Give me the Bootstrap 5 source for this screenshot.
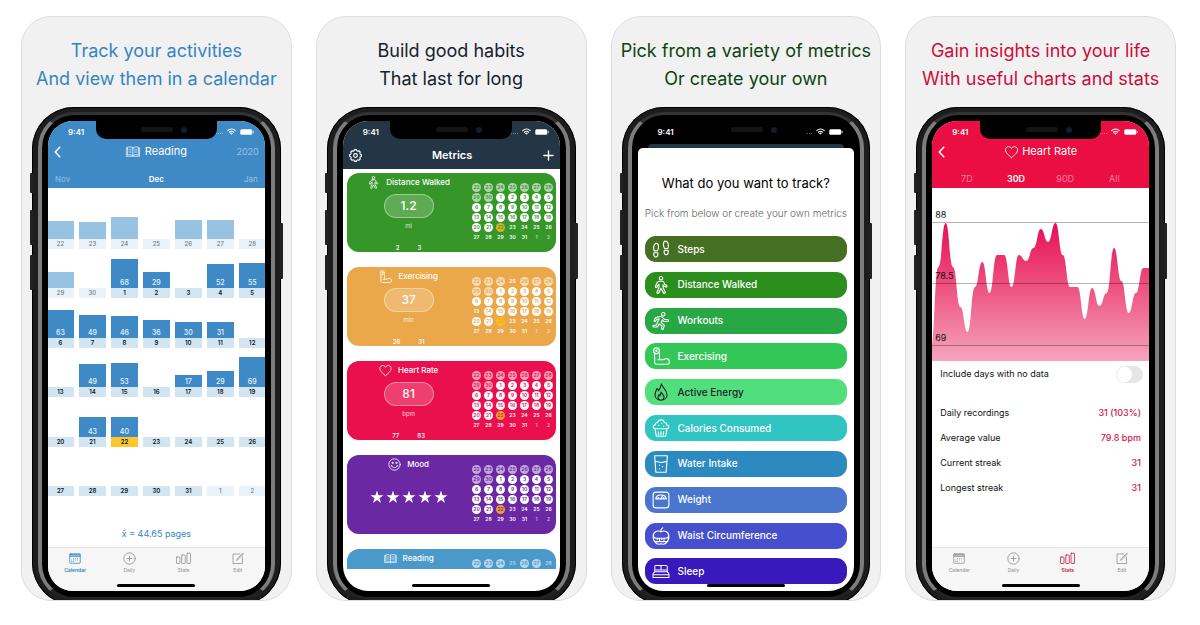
<!DOCTYPE html>
<html lang="en">
<head>
<meta charset="utf-8">
<meta name="viewport" content="width=device-width, initial-scale=1">
<title>Metrics tracker – previews</title>
<link href="https://cdn.jsdelivr.net/npm/bootstrap@5.3.0/dist/css/bootstrap.min.css" rel="stylesheet">
<style>
  body { font-family: Inter, "Liberation Sans", sans-serif; background: #fff; color: #111; }
  a { text-decoration: none; color: inherit; }
  .gallery { padding: 16px 24px 22px 21px; }
  .promo { background: #f1f1f1; border: 1px solid #dcdede; border-radius: 30px; padding: 20px 10px 0; }
  .promo h2 { font-size: 18px; line-height: 28px; font-weight: 400; margin: 0 -8px 14px; }
  .tone-blue { color: #3585c2; } .tone-navy { color: #16222e; }
  .tone-green { color: #0c4411; } .tone-red { color: #cb0d3c; }
  svg.ico { fill: none; stroke: currentColor; stroke-width: 1.5; stroke-linecap: round; stroke-linejoin: round; flex: none; }
  svg.ico.heavy { stroke-width: 3; }

  /* phone body */
  .phone { background: #1d1d1d; border-radius: 42px; padding: 5px 6px; margin-bottom: -5px; box-shadow: inset 0 0 0 1px #000; }
  .rim { border: solid; border-width: 3px 4px; border-color: #333 #7d7d7d #222; border-radius: 36px; background: #000; padding: 6px; }
  .screen { aspect-ratio: 217 / 471; border-radius: 25px; background: #fff; }
  .side-key { width: 3px; background: #222; border-radius: 1px; left: -2px; height: 35px; }
  .key-mute { top: 66px; height: 20px; } .key-up { top: 103px; } .key-down { top: 148px; }
  .key-power { left: auto; right: -2px; top: 116px; height: 56px; }
  .notch { left: 22%; right: 22%; top: -1px; height: 19px; background: #000; border-radius: 0 0 10px 10px; z-index: 2; }
  .notch i { width: 32px; height: 5px; border-radius: 3px; background: #151515; }
  .notch b { width: 6px; height: 6px; border-radius: 3px; background: #101d33; }
  .status { height: 21px; padding: 0 11px 0 20px; font-size: 8px; font-weight: 600; color: #fff; }
  .signal { width: 10px; height: 5px; border-bottom: 1px dotted rgba(255,255,255,.4); }
  .home-bar { width: 78px; height: 3px; border-radius: 2px; background: #000; bottom: 4px; z-index: 3; }
  .bar-title { height: 19px; font-size: 11px; padding: 0 6px; }
  .year { font-size: 9px; }
  .head-blue { background: #3e8ac7; } .head-navy { background: #243646; } .head-red { background: #ea0e42; }
  .icon-btn { background: none; border: 0; padding: 0; color: #fff; line-height: 0; }

  /* tabs in the coloured headers */
  .months { height: 27px; padding: 9px 7px 0; font-size: 8px; line-height: 18px; }
  .ranges { height: 27px; padding: 9px 10px 0; font-size: 9px; line-height: 18px; }
  .dim { opacity: .45; }

  /* month calendar */
  .month { margin: 11px -1px 0; }
  .week { display: grid; grid-template-columns: repeat(7, 1fr); column-gap: 5px; flex: 1 1 0; }
  .day-bar { background: #3e8ac7; color: #e9f3fa; font-size: 7px; line-height: 10px; font-weight: 500; }
  .day-num { background: #d2e5f3; height: 10px; font-size: 6px; line-height: 10px; font-weight: 600; }
  .other .day-bar { background: #97c2e1; } .other .day-num { background: #e9f2f9; color: #777; font-weight: 500; }
  .today .day-num { background: #fdc62f; }
  .mean { height: 51px; padding-top: 16px; font-size: 9px; line-height: 44px; color: #3585c2; }

  .tabbar { height: 44px; background: #f6f6f6; border-top: 1px solid #e6e6e6; padding-top: 4px; font-size: 5px; line-height: 7px; color: #8c8c8c; }
  .tab-item { gap: 2px; }

  /* metric cards */
  .metrics { padding: 4px 4px 0; gap: 15px; margin-bottom: 22px; }
  .metric { height: 79px; border-radius: 12px; color: #fff; flex: none; }
  .metric.peek { height: 22px; border-radius: 12px 12px 0 0; }
  .metric-main { padding-top: 3px; }
  .metric-name { font-size: 8px; line-height: 12px; font-weight: 500; gap: 6px; height: 12px; }
  .pill { width: 50px; height: 24px; margin-top: 6px; border: 1px solid rgba(255,255,255,.4); border-radius: 12px; background: rgba(255,255,255,.2); color: #fff; font-size: 12px; line-height: 20px; padding: 0; font-weight: 500; }
  .unit { font-size: 6px; line-height: 10px; margin-top: 3px; opacity: .8; }
  .minmax { font-size: 6px; line-height: 8px; gap: 18px; font-weight: 600; margin-top: 13px; opacity: .9; }
  .stars { gap: 2px; margin-top: 20px; }
  .mini { width: 85px; padding-top: 10px; display: grid; grid-template-columns: repeat(7, 12px); grid-auto-rows: 10px; justify-items: center; }
  .mini span { width: 9px; height: 9px; border-radius: 5px; font-size: 5px; line-height: 9px; text-align: center; font-weight: 600; }
  .mini .on { background: #fff; color: var(--tone); } .mini .past { background: rgba(255,255,255,.6); color: var(--tone); }
  .mini .now { background: var(--now); color: var(--tone); } .mini .next { opacity: .6; }

  /* picker */
  .behind { height: 6px; margin: 2px 10px 0; background: #243646; border-radius: 4px 4px 0 0; }
  .sheet { background: #fff; border-radius: 5px 5px 0 0; margin-top: -2px; padding: 24px 7px 7px; z-index: 1; }
  .sheet h3 { font-size: 13px; line-height: 22px; font-weight: 400; margin: 0 -6px; color: #000; }
  .sheet p { font-size: 10px; line-height: 16px; font-weight: 300; color: #666; margin: 11px -6px 15px; }
  .option { height: 26px; border: 0; border-radius: 11px; padding: 0 7px; gap: 8px; color: #fff; font-size: 10px; font-weight: 500; background: var(--tone); }

  /* stats */
  .chart { height: 173px; }
  .chart svg { width: 100%; height: 100%; }
  .axis { left: 3px; font-size: 9px; line-height: 12px; color: #111; }
  .axis-top { top: 21px; } .axis-mid { top: 82px; } .axis-low { top: 144px; }
  .include { padding: 0 6px 0 8px; height: 26px; font-size: 9px; }
  .include .form-check-input { width: 27px; height: 17px; margin: 0; border: 0; background-color: #e6e6e7; --bs-form-switch-bg: url("data:image/svg+xml,%3csvg xmlns='http://www.w3.org/2000/svg' viewBox='-4 -4 8 8'%3e%3ccircle r='3.6' fill='%23fff'/%3e%3c/svg%3e"); }
  .facts { margin: 13px 0 0; font-size: 9px; line-height: 15px; }
  .facts th { font-weight: 400; padding: 5px 8px; }
  .facts td { font-weight: 500; color: #d2144b; text-align: right; padding: 5px 8px; }
</style>
</head>
<body>
<svg class="d-none" aria-hidden="true">
  <symbol id="i-book" viewBox="0 0 30 24"><path d="M15 4.500C12 2.500 7 2.500 4 3.500v15.500c3-1 8-1 11 1 3-2 8-2 11-1V3.500c-3-1-8-1-11 1zM15 4.500V20M4 5H1.500v16.500H13.500l1.500 1 1.500-1H28.500V5H26M7 8.500c2-.5 3.500-.3 5 .3M7 13c2-.5 3.500-.3 5 .3M23 8.500c-2-.5-3.500-.3-5 .3M23 13c-2-.5-3.500-.3-5 .3"/></symbol>
  <symbol id="i-heart" viewBox="0 0 24 24"><path d="M12 21.500C8 18 1.500 13.500 1.500 8.300 1.500 5 4 2.800 6.800 2.800c2.300 0 4.200 1.200 5.200 3.400 1-2.200 2.900-3.400 5.200-3.400 2.800 0 5.300 2.200 5.300 5.500 0 5.200-6.500 9.700-10.500 13.200z"/></symbol>
  <symbol id="i-gear" viewBox="-12 -12 24 24"><path stroke-width="2" d="M-1.900-10.800 1.900-10.800 2.500-8.700 4.400-7.900 6.300-9 9-6.300 7.900-4.400 8.700-2.500 10.800-1.900 10.800 1.900 8.700 2.500 7.900 4.400 9 6.300 6.300 9 4.400 7.900 2.500 8.700 1.900 10.800-1.900 10.800-2.500 8.700-4.400 7.900-6.300 9-9 6.300-7.900 4.400-8.700 2.500-10.800 1.900-10.800-1.900-8.700-2.500-7.900-4.400-9-6.300-6.300-9-4.400-7.900-2.500-8.700z"/><circle r="3.500" stroke-width="2"/></symbol>
  <symbol id="i-plus" viewBox="0 0 24 24"><path d="M12 2v20M2 12h20"/></symbol>
  <symbol id="i-back" viewBox="0 0 14 24"><path d="M11.500 2.500 2.500 12l9 9.500"/></symbol>
  <symbol id="i-smile" viewBox="0 0 24 24"><circle cx="12" cy="12" r="10.500"/><path d="M6.500 14.500c1.500 4.500 9.500 4.500 11 0M5.500 14.500h2M16.500 14.500h2"/><circle cx="8.500" cy="9" r="1.200"/><circle cx="15.500" cy="9" r="1.200"/></symbol>
  <symbol id="i-star" viewBox="0 0 24 24"><path fill="currentColor" stroke="none" d="m12 1 2.700 8H23l-6.700 5 2.500 8.200L12 17.200l-6.800 5L7.700 14 1 9h8.300z"/></symbol>
  <symbol id="i-steps" viewBox="0 0 24 24"><path d="M6 4.500c-2.800 0-4 3.500-3.800 6.500.1 1.500.5 2.500.6 3.500h4.400C7.500 13 8.700 12 8.700 9.500 8.700 7 8 4.500 6 4.500zM2.500 17h5.200c.5 3-.3 5.500-2.600 5.500S2 20 2.500 17zM18 1.500c-2 0-2.700 2.500-2.700 5s1.200 3.500 1.500 5h4.400c.1-1 .5-2 .6-3.500.2-3-1-6.500-3.800-6.500zM16.300 14h5.200c.5 3-.3 5.500-2.600 5.500s-3.100-2.500-2.600-5.500z"/></symbol>
  <symbol id="i-walk" viewBox="0 0 24 24"><circle cx="12" cy="3" r="2.300"/><path d="M10 7h4c1.200 0 1.800.8 2.200 2l1 2.400 2.300 1.400c1 .8 0 2.400-1.200 1.800L15.500 13l-.8-1.300v3.500l3 6.300c.5 1.500-1.500 2.400-2.300 1L12 16.500l-3 6c-1 1.300-3 .3-2.300-1.200l2.600-6V11L7.500 12.500l-.8 2.300c-.6 1.200-2.400.6-2-.8l1-3.200C6.500 9 8 7 10 7z"/></symbol>
  <symbol id="i-run" viewBox="0 0 24 24"><circle cx="15" cy="3" r="2.300"/><path d="M6 7.200 11 6c1.500-.2 3 .5 3.800 1.700L16.500 10l4.500.2c1.400.2 1.400 2 0 2.200l-5.300.2-2-2-1.500 3.600 3.500 2.600c.6.600.6 1.200.4 2l-1 3.600c-.6 1.400-2.600.8-2.400-.6l.6-3.400L9.500 16l-1.700 3.200c-.4.700-1 .8-1.700.8H2.300c-1.500-.2-1.500-2.200 0-2.400L5.600 17.500 9.500 9l-3 .6L4.800 12c-1 1-2.500 0-1.900-1.200L4.600 8c.3-.5.800-.7 1.400-.8z"/></symbol>
  <symbol id="i-arm" viewBox="0 0 24 24"><circle cx="6" cy="5" r="3.800"/><circle cx="6" cy="5" r=".8"/><path d="M3.500 8v12.500c0 1.500 1 2.500 2.500 2.500h15c1.500 0 2-1 2-2.500 0-3-.5-5-3.500-5-2.500 0-4 1.500-5.500 1.500h-4V8.500M10 17H7.500"/></symbol>
  <symbol id="i-flame" viewBox="0 0 24 24"><path d="M12.500 1c1 5 7.500 8 7.500 14.500 0 4.500-3.500 7.500-8 7.500s-8-3-8-7.500C4 12 6 10 6.500 7.500 8 8 8.500 9 8.700 10.500 10.500 8 12 5 12.500 1zM12 12c.5 2 4.500 4 4 7.500-.3 2-2 3.500-4 3.500s-3.700-1.500-4-3.500c-.2-1.800.6-2.700 1-4 1 .3 1.300 1 1.500 1.800.8-1.500 1.500-3 1.500-5.300z"/></symbol>
  <symbol id="i-muffin" viewBox="0 0 24 24"><path d="M4 13c-3.500-.5-3-5 .3-5C4 5 6.500 4.500 7.500 5 8 2 10 1 12 1s4 1 4.500 4c1-.5 3.500 0 3.200 3 3.300 0 3.800 4.500.3 5zM4 13l1.800 10h12.400L20 13M8.500 17l.5 4M12 17v4M15.500 17l-.5 4M9 8.500h.1M13 6h.1M15.500 9.500h.1"/></symbol>
  <symbol id="i-glass" viewBox="0 0 24 24"><path d="M3.500 1h17L18.800 23H5.200zM4.200 9c3-1.500 5 1 8 1s4.500-2 7.600-1M10 13.500h.1M14 15.500h.1M10 18.500h.1"/></symbol>
  <symbol id="i-scale" viewBox="0 0 24 24"><rect x="1.500" y="1.500" width="21" height="21" rx="4"/><path d="M5 10.500C5.500 3.500 18.500 3.500 19 10.500zM12 10l1.800-3M8 8.500l.8.600M16 8.500l-.8.600"/></symbol>
  <symbol id="i-apple" viewBox="0 0 24 24"><path d="M12 6.500C8 4 1.500 5.500 1.500 12.500 1.500 18 5 23 9 23c1.200 0 2-.5 3-.5s1.800.5 3 .5c4 0 7.500-5 7.500-10.500C22.500 5.500 16 4 12 6.500zM12 6.500C11.500 4 12.500 2 14.500 1M4 19.500h15.500c2.500-1 3-4.500 3-7-1 2-3 2.500-5 2.500H6c-2 0-3.500-.5-4.500-2.500M7 15v2M10 15v3M13 15v2M16 15v3"/></symbol>
  <symbol id="i-bed" viewBox="0 0 26 24"><path d="M4 13V5.500C4 4.500 4.500 4 5.500 4h15c1 0 1.500.5 1.500 1.500V13M13 4v6.500M5.500 10.500h15M4 13 1.500 16v5.500h23V16L22 13zM1.500 17.500h23"/></symbol>
  <symbol id="i-cal" viewBox="0 0 24 24"><rect x="1.500" y="2.500" width="21" height="19" rx="1.500"/><path stroke-width="2.500" d="M2 4.500h20"/><path d="M2 8h20M9 12h.1M13 12h.1M17 12h.1M5.500 15h.1M9 15h.1M13 15h.1M17 15h.1M5.500 18h.1M9 18h.1"/></symbol>
  <symbol id="i-add" viewBox="0 0 24 24"><circle cx="12" cy="12" r="10.500"/><path d="M12 7.500v9M7.500 12h9"/></symbol>
  <symbol id="i-bars" viewBox="0 0 30 24"><rect x="1" y="9" width="7" height="13" rx="1"/><rect x="11.500" y="5" width="7" height="17" rx="1"/><rect x="22" y="1.500" width="7" height="20.500" rx="1"/></symbol>
  <symbol id="i-edit" viewBox="0 0 24 24"><path d="M15.500 3H2v19h19V9M9.500 15l1-3L22 1.500l1 1L12.300 14z"/></symbol>
  <symbol id="i-wifi" viewBox="0 0 24 18"><path stroke-width="3" d="M2 6.500c5.500-5.500 14.500-5.500 20 0M6.500 11c3-3 8-3 11 0"/><path fill="currentColor" d="m9.500 14 2.500 2.500 2.500-2.500c-1.300-1.200-3.700-1.200-5 0z"/></symbol>
  <symbol id="i-batt" viewBox="0 0 28 12"><rect x=".5" y=".5" width="24" height="11" rx="3" fill="currentColor" stroke="none"/><path d="M26.500 4.500v3"/></symbol>
</svg>

<main class="container-fluid gallery">
  <div class="row g-4 row-cols-1 row-cols-sm-2 row-cols-lg-4">

    <div class="col"><section class="promo h-100 overflow-hidden text-center">
      <h2 class="tone-blue">Track your activities<br>And view them in a calendar</h2>
      <div class="phone position-relative"><div class="rim"><div class="screen position-relative overflow-hidden d-flex flex-column">
        <header class="head-blue text-white">
          <div class="status"></div>
          <div class="bar-title d-flex align-items-center justify-content-between position-relative">
            <button class="icon-btn" aria-label="Back"><svg class="ico heavy" width="7" height="12"><use href="#i-back"/></svg></button>
            <span class="position-absolute start-50 translate-middle-x d-flex align-items-center gap-1"><svg class="ico" width="15" height="13"><use href="#i-book"/></svg>Reading</span>
            <span class="year dim">2020</span>
          </div>
          <nav class="months d-flex"><a href="#nov" class="col text-start dim">Nov</a><a href="#dec" class="col fw-semibold">Dec</a><a href="#jan" class="col text-end dim">Jan</a></nav>
        </header>
        <div class="month flex-fill d-flex flex-column" id="month"></div>
        <div class="mean">x̄ = 44.65 pages</div>
        <nav class="tabbar row row-cols-4 g-0" data-active="0"></nav>
      </div></div></div>
    </section></div>

    <div class="col"><section class="promo h-100 overflow-hidden text-center">
      <h2 class="tone-navy">Build good habits<br>That last for long</h2>
      <div class="phone position-relative"><div class="rim"><div class="screen position-relative overflow-hidden d-flex flex-column">
        <header class="head-navy text-white pb-1">
          <div class="status"></div>
          <div class="bar-title d-flex align-items-center justify-content-between mt-1 fw-semibold">
            <button class="icon-btn" aria-label="Settings"><svg class="ico" width="13" height="13"><use href="#i-gear"/></svg></button>
            Metrics
            <button class="icon-btn" aria-label="Add"><svg class="ico heavy" width="11" height="11"><use href="#i-plus"/></svg></button>
          </div>
        </header>
        <div class="metrics flex-fill d-flex flex-column overflow-hidden" id="metrics"></div>
      </div></div></div>
    </section></div>

    <div class="col"><section class="promo h-100 overflow-hidden text-center">
      <h2 class="tone-green">Pick from a variety of metrics<br>Or create your own</h2>
      <div class="phone position-relative"><div class="rim"><div class="screen bg-black position-relative overflow-hidden d-flex flex-column">
        <div class="status"></div>
        <div class="behind"></div>
        <div class="sheet flex-fill d-flex flex-column">
          <h3>What do you want to track?</h3>
          <p>Pick from below or create your own metrics</p>
          <div class="flex-fill d-flex flex-column justify-content-between" id="options"></div>
        </div>
      </div></div></div>
    </section></div>

    <div class="col"><section class="promo h-100 overflow-hidden text-center">
      <h2 class="tone-red">Gain insights into your life<br>With useful charts and stats</h2>
      <div class="phone position-relative"><div class="rim"><div class="screen position-relative overflow-hidden d-flex flex-column">
        <header class="head-red text-white">
          <div class="status"></div>
          <div class="bar-title d-flex align-items-center justify-content-between position-relative">
            <button class="icon-btn" aria-label="Back"><svg class="ico heavy" width="7" height="12"><use href="#i-back"/></svg></button>
            <span class="position-absolute start-50 translate-middle-x d-flex align-items-center gap-1 text-nowrap"><svg class="ico" width="14" height="14"><use href="#i-heart"/></svg>Heart Rate</span>
          </div>
          <nav class="ranges d-flex"><a href="#7d" class="col dim">7D</a><a href="#30d" class="col fw-semibold">30D</a><a href="#90d" class="col dim">90D</a><a href="#all" class="col dim">All</a></nav>
        </header>
        <div class="chart position-relative">
          <svg class="d-block" viewBox="0 0 217 173" preserveAspectRatio="none">
            <defs><linearGradient id="fade" gradientUnits="userSpaceOnUse" x1="0" y1="35" x2="0" y2="173"><stop offset="0" stop-color="#e60f56"/><stop offset=".5" stop-color="#ee5784"/><stop offset="1" stop-color="#f5a5bf"/></linearGradient></defs>
            <path id="curve" fill="url(#fade)"/>
            <path d="M0 34.500h217M0 95.500h217M0 157.500h217" stroke="#000" stroke-opacity=".3" fill="none"/>
          </svg>
          <span class="axis axis-top position-absolute">88</span><span class="axis axis-mid position-absolute">78.5</span><span class="axis axis-low position-absolute">69</span>
        </div>
        <div class="include form-switch d-flex align-items-center justify-content-between">
          <label for="nodata">Include days with no data</label><input class="form-check-input" type="checkbox" role="switch" id="nodata">
        </div>
        <table class="facts text-start">
          <tr><th scope="row">Daily recordings</th><td>31 (103%)</td></tr>
          <tr><th scope="row">Average value</th><td>79.8 bpm</td></tr>
          <tr><th scope="row">Current streak</th><td>31</td></tr>
          <tr><th scope="row">Longest streak</th><td>31</td></tr>
        </table>
        <nav class="tabbar row row-cols-4 g-0 mt-auto" data-active="2"></nav>
      </div></div></div>
    </section></div>

  </div>
</main>

<script src="https://cdn.jsdelivr.net/npm/bootstrap@5.3.0/dist/js/bootstrap.bundle.min.js"></script>
<script>
  const icon = (id, w, h) => `<svg class="ico" width="${w}" height="${h}"><use href="#i-${id}"/></svg>`;

  // shared phone furniture
  document.querySelectorAll('.phone').forEach(p => p.insertAdjacentHTML('beforeend',
    ['key-mute', 'key-up', 'key-down', 'key-power'].map(k => `<span class="side-key ${k} position-absolute"></span>`).join('')));
  document.querySelectorAll('.screen').forEach(s => s.insertAdjacentHTML('beforeend',
    `<div class="notch position-absolute d-flex align-items-center justify-content-center gap-2"><i class="ms-3"></i><b></b></div>
     <div class="home-bar position-absolute start-50 translate-middle-x"></div>`));
  document.querySelectorAll('.status').forEach(s => {
    s.classList.add('d-flex', 'align-items-center', 'justify-content-between');
    s.innerHTML = `<span>9:41</span><span class="d-flex align-items-center gap-1"><span class="signal"></span>${icon('wifi', 9, 7)}${icon('batt', 14, 6)}</span>`;
  });
  document.querySelectorAll('.tabbar').forEach(t => {
    const tone = t.dataset.active === '0' ? 'tone-blue' : 'tone-red';
    t.innerHTML = [['cal', 'Calendar', 12], ['add', 'Daily', 13], ['bars', 'Stats', 15], ['edit', 'Edit', 12]].map(([i, n, w], k) =>
      `<a href="#${n.toLowerCase()}" class="col tab-item d-flex flex-column align-items-center ${k == t.dataset.active ? tone + ' fw-semibold' : ''}">${icon(i, w, 13)}${n}</a>`).join('');
  });

  // December calendar: [bar height, value] per day
  const days = [22,23,24,25,26,27,28,29,30,...Array.from({length: 31}, (_, i) => i + 1),1,2];
  const bars = {0:[18],1:[17],2:[22],4:[19],5:[19],7:[16],9:[29,68],10:[16,29],12:[24,52],13:[25,55],14:[28,63],15:[23,49],16:[22,46],17:[18,36],18:[16,30],19:[16,31],
    22:[23,49],23:[24,53],25:[12,17],26:[16,29],27:[30,69],29:[20,43],30:[20,40]};
  let html = '';
  for (let w = 0; w < 6; w++) {
    html += '<div class="week">';
    for (let d = 0; d < 7; d++) {
      const n = w * 7 + d, b = bars[n];
      html += `<div class="d-flex flex-column justify-content-end ${n < 9 || n > 39 ? 'other' : ''} ${n === 30 ? 'today' : ''}">` +
        (b ? `<div class="day-bar d-flex flex-column justify-content-end" style="height:${b[0]}px">${b[1] || ''}</div>` : '') +
        `<div class="day-num">${days[n]}</div></div>`;
    }
    html += '</div>';
  }
  document.getElementById('month').innerHTML = html;

  // metric cards
  const mini = skip => days.map((d, n) => `<span class="${skip.includes(n) ? '' : n < 9 ? 'past' : n < 30 ? 'on' : n === 30 ? 'now' : n > 39 ? 'next' : ''}">${d}</span>`).join('');
  const peekDots = days.slice(0, 7).map((d, n) => `<span class="${n === 3 || n === 6 ? 'next' : 'past'}">${d}</span>`).join('') +
    [0, 0, 1, 0, 0, 1, 1].map(on => `<span class="${on ? 'on' : ''}"></span>`).join('');
  document.getElementById('metrics').innerHTML = [
    ['walk', 'Distance Walked', '#379629', '1.2', 'mi', 2, 3, [], '#d8b32a'],
    ['arm', 'Exercising', '#eba84b', '37', 'min', 26, 31, [3, 21], '#fbbc14'],
    ['heart', 'Heart Rate', '#ea104d', '81', 'bpm', 77, 83, [], '#f0a02c'],
    ['smile', 'Mood', '#6a28a2', null, '', '', '', [], '#ee9f2f'],
    ['book', 'Reading', '#4b98cb', null, '', '', '', null, '']
  ].map(([i, name, tone, v, unit, lo, hi, skip, now]) => `
    <article class="metric ${skip ? '' : 'peek'} d-flex overflow-hidden" style="background:${tone};--tone:${tone};--now:${now}">
      <div class="metric-main flex-fill d-flex flex-column align-items-center">
        <div class="metric-name d-flex align-items-center">${icon(i, 13, 13)}${name}</div>
        ${v ? `<button class="pill">${v}</button><div class="unit">${unit}</div><div class="minmax d-flex"><span>${lo}</span><span>${hi}</span></div>`
            : skip ? `<div class="stars d-flex">${icon('star', 14, 14).repeat(5)}</div>` : ''}
      </div>
      <div class="mini">${skip ? mini(skip) : peekDots}</div>
    </article>`).join('');

  // metric picker
  document.getElementById('options').innerHTML = [
    ['steps', 'Steps', '#456f22'], ['walk', 'Distance Walked', '#2b8d1c'], ['run', 'Workouts', '#28a745'], ['arm', 'Exercising', '#33c758'],
    ['flame', 'Active Energy', '#50df7c'], ['muffin', 'Calories Consumed', '#30c5c1'], ['glass', 'Water Intake', '#2b8bc1'],
    ['scale', 'Weight', '#4a76cd'], ['apple', 'Waist Circumference', '#464fcd'], ['bed', 'Sleep', '#3819bb']
  ].map(([i, n, tone]) => `<button class="option d-flex align-items-center ${i === 'flame' ? 'text-dark' : ''}" style="--tone:${tone}">${icon(i, 18, 18)}${n}</button>`).join('');

  // heart-rate curve, flat at each reading
  const ys = [160,79,35,79,119,144,99,74,105,67,67,99,67,73,60,41,54,35,67,99,99,131,100,118,105,60,93,125,105,80,80];
  let d = 'M-1 173V' + ys[0], px = -1, py = ys[0];
  ys.slice(1).forEach((y, k) => {
    const x = 6.33 + 7.33 * k, m = (px + x) / 2;
    d += `C${m} ${py} ${m} ${y} ${x} ${y}`; px = x; py = y;
  });
  document.getElementById('curve').setAttribute('d', d + 'V173Z');
</script>
</body>
</html>
